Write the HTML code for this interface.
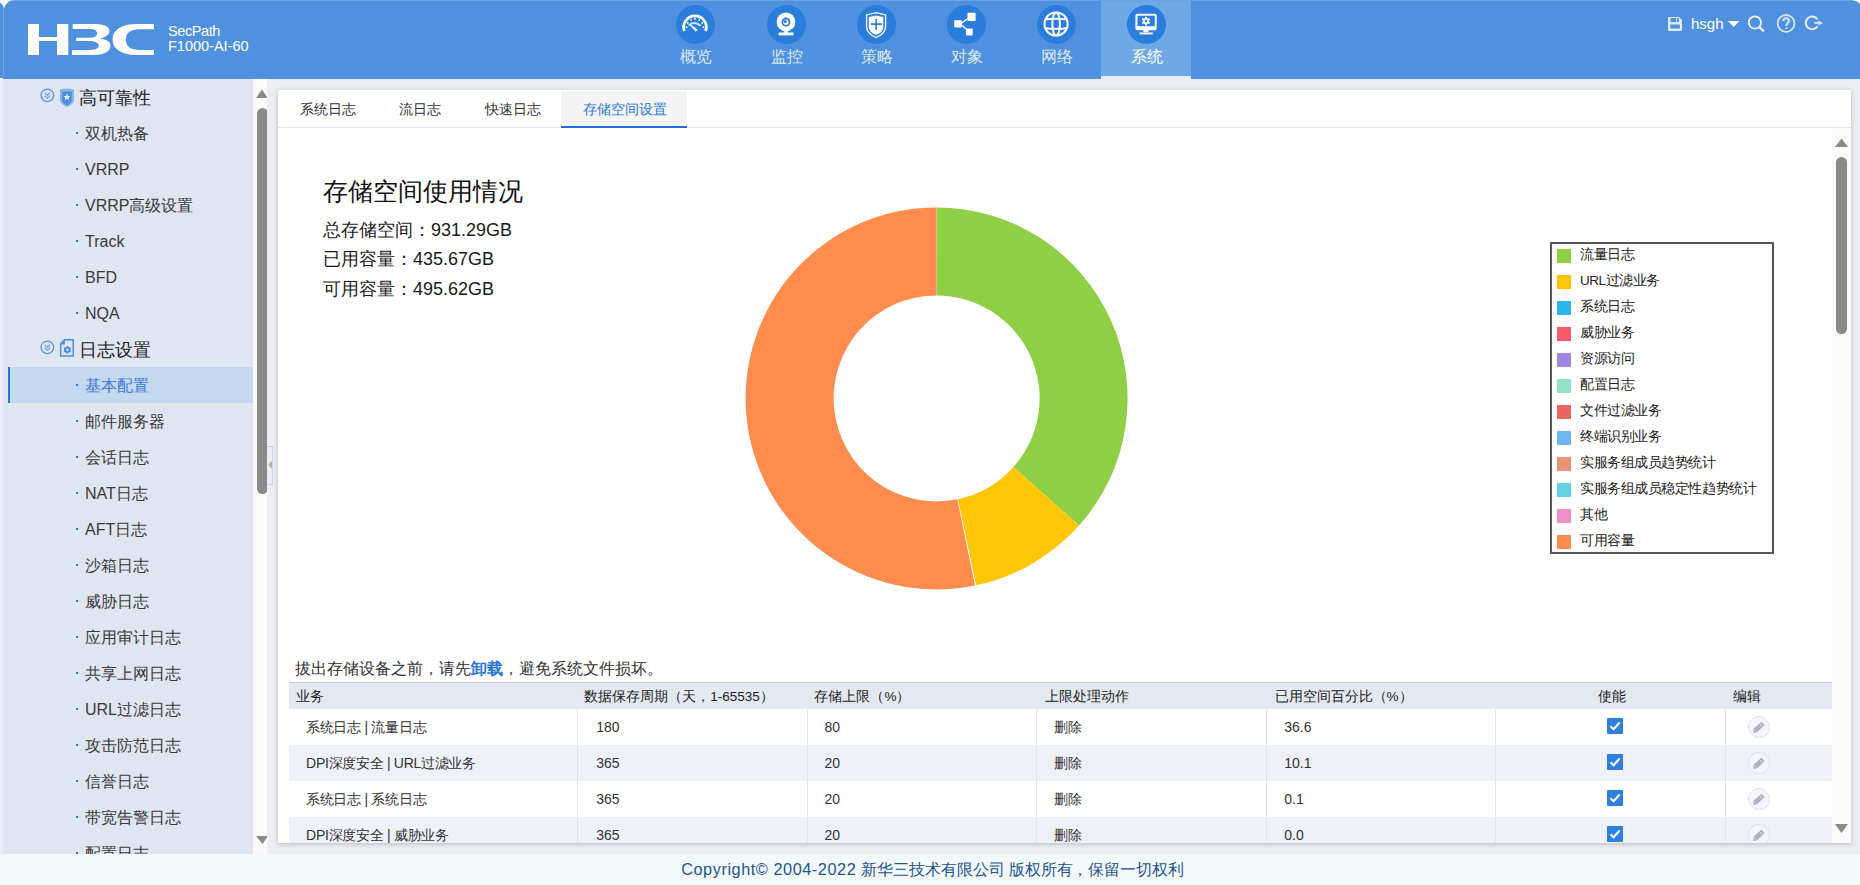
<!DOCTYPE html>
<html><head><meta charset="utf-8">
<style>
*{margin:0;padding:0;box-sizing:border-box}
html,body{width:1860px;height:885px;overflow:hidden;background:#eceef3;font-family:"Liberation Sans",sans-serif;color:#333}
.abs{position:absolute}
#hdr{position:absolute;left:0;top:0;width:1860px;height:79px;background:#4f91de}
.nav{position:absolute;top:0;width:90px;height:79px}
.nav .c{position:absolute;left:26px;top:4.8px;width:39px;height:39px;border-radius:50%;background:#2b7ddc}
.nav .c svg{position:absolute;left:-0.9px;top:-0.5px;overflow:visible}
.nav .t{position:absolute;left:0.5px;width:90px;top:46.5px;text-align:center;font-size:16px;color:#dfe9f7;line-height:20px}
.nav.on{background:#6ea8e6}
.nav.on .t{color:#fff}
.nav.on:after{content:"";position:absolute;left:0;bottom:0;width:90px;height:3px;background:#e6eff9}
#side{position:absolute;left:3px;top:79px;width:250px;height:775px;background:linear-gradient(to right,#dde6f4 0,#dde6f4 5px,#dfe5f1 5px);overflow:hidden}
#side .it{position:absolute;left:0;width:250px;height:36px;line-height:38px;font-size:16px;color:#3a3a3a}
#side .it .d{position:absolute;left:73px;top:17px;width:2px;height:2px;background:#2a7ad8}
#side .it span{position:absolute;left:82px;top:0}
#side .g{position:absolute;left:0;width:250px;height:36px;line-height:36px;font-size:18px;color:#222}
#side .g span{position:absolute;left:76px;top:0.5px}
#side .sel{background:#c4d8ef;left:5px;width:245px}
#side .sel:before{content:"";position:absolute;left:0;top:0;width:2px;height:36px;background:#2a72d8}
#side .sel span{color:#3d7ad6;left:77px}
#side .sel .d{left:68px}
#sb1{position:absolute;left:253px;top:79px;width:14px;height:775px;background:#fafafa;overflow:hidden}
#panel{position:absolute;left:278px;top:90px;width:1573px;height:753px;background:#fff;box-shadow:0 1px 5px rgba(0,0,0,0.22)}
#footer{position:absolute;left:0;top:854px;width:1860px;height:31px;background:#f3f9f9;text-align:center;font-size:16.3px;padding-left:5px;color:#24548f;line-height:31px}
#panel .tab{position:absolute;top:1px;height:37px}
#panel .tab span{position:absolute;top:8px;font-size:14px;line-height:20px;color:#333;white-space:nowrap}
#panel .tab.on{background:#f4f4f4;border-bottom:2px solid #1d72dc}
#panel .tab.on span{color:#2a7ad8}
#legend{position:absolute;left:1272px;top:152px;width:224px;height:312px;border:2px solid #575757;background:#fff}
#legend i{position:absolute;left:5px;width:14px;height:14px}
#legend span{position:absolute;left:28px;margin-top:-2.5px;font-size:13.5px;letter-spacing:-0.45px;line-height:20px;color:#222;white-space:nowrap}
#tbl{position:absolute;left:11px;top:592px;width:1543px;height:161px;overflow:hidden;border-top:1px solid #c9c9c9}
#tbl .th{position:absolute;left:0;top:0;width:1543px;height:26px;background:#e3e9f1}
#tbl .ht{position:absolute;top:3.5px;font-size:13.5px;line-height:20px;color:#222;white-space:nowrap}
#tbl .tr{position:absolute;left:0;width:1543px;height:36px}
#tbl .vl{position:absolute;top:0;width:1px;height:36px;background:#e4e4e4}
#tbl .td{position:absolute;top:7.5px;font-size:14px;line-height:20px;color:#333;white-space:nowrap}
#tbl .cb{position:absolute;top:9px;width:16px;height:16px;background:#2f7fdc;border-radius:1px}
#tbl .cb svg{display:block}
#tbl .ed{position:absolute;top:6.5px;width:22px;height:22px;border:1px solid #dde2ee;border-radius:50%;background:#f4f6fb}
#tbl .ed svg{position:absolute;left:-1px;top:-1px}
</style></head><body>
<div id="hdr">
  <svg class="abs" style="left:28px;top:24px" width="126" height="31" viewBox="0 0 126 31">
    <path fill="#fff" d="M0 0H11V13H29V0H40.3V31H29V17H11V31H0Z"/><path fill="#fff" d="M44.7 0H66C76 0 81.5 2.5 81.5 7.2C81.5 10.5 78 13 72 14.5C79 15.5 82.5 18 82.5 21.5C82.5 27.5 76 31 66 31H44V26H60C67 26 70.7 24.5 70.7 21.7C70.7 18.8 67 17 61 17H48.2V13.7H61C66.5 13.7 69.2 11.8 69.2 9.2C69.2 6.5 66 5 60 5H44.7Z"/><path fill="#fff" d="M126 0H109C93 0 84.6 6 84.6 15.5C84.6 25 93 31 109 31H126V26H111.5C102.5 26 97.8 22 97.8 15.5C97.8 9 102.5 5.3 111.5 5.3H126Z"/>
  </svg>
  <div class="abs" style="left:168px;top:24px;font-size:14.5px;line-height:15px;color:#fff"><span style="letter-spacing:-0.4px">SecPath</span><br>F1000-AI-60</div>
  <div class="nav" style="left:650px"><div class="c"><svg width="40" height="40" viewBox="0 0 40 40"><path d="M9.36 27A11.3 11.3 0 1 1 30.64 27" fill="none" stroke="#fff" stroke-width="2.7"/>
<g fill="#fff"><circle cx="20" cy="14.7" r="1"/><circle cx="15.9" cy="15.9" r="0.9"/><circle cx="24.2" cy="15.9" r="0.9"/><circle cx="12.8" cy="19" r="0.9"/><circle cx="27.3" cy="19" r="0.9"/><circle cx="11.6" cy="23.2" r="0.9"/><circle cx="28.5" cy="23.2" r="0.9"/></g>
<path d="M13.6 21.4Q19.5 16.2 25.8 21.9" fill="none" stroke="#fff" stroke-width="1.9" opacity="0.8"/>
<path d="M14.9 21.3L15.5 20.5L22.8 25.5L20.9 27.7Z" fill="#fff"/></svg></div><div class="t">概览</div></div>
  <div class="nav" style="left:741px"><div class="c"><svg width="40" height="40" viewBox="0 0 40 40"><circle cx="20" cy="17.9" r="9.4" fill="#fff"/><circle cx="20" cy="18.1" r="4.5" fill="#2b7ddc"/><circle cx="20" cy="18.3" r="2.7" fill="#fff"/><circle cx="19.2" cy="17.4" r="1.5" fill="#2b7ddc"/>
<rect x="18.4" y="26" width="3.4" height="3" fill="#fff"/><rect x="12.7" y="28.5" width="14.8" height="2.9" fill="#fff"/></svg></div><div class="t">监控</div></div>
  <div class="nav" style="left:831px"><div class="c"><svg width="40" height="40" viewBox="0 0 40 40"><path d="M20.1 8.6L29.6 10.9V22.5C29.6 27.5 25 31.5 20.1 33.5C15.2 31.5 10.6 27.5 10.6 22.5V10.9Z" fill="none" stroke="#fff" stroke-width="1.3"/>
<path d="M20.1 11.6L27.3 12.9V23C27.3 26.8 23.8 29.6 20.1 30.9C16.4 29.6 12.8 26.8 12.8 23V12.9Z" fill="#fff"/>
<path d="M14.9 20.2H26M20.2 15V25.7" stroke="#2b7ddc" stroke-width="1.7"/></svg></div><div class="t">策略</div></div>
  <div class="nav" style="left:921px"><div class="c"><svg width="40" height="40" viewBox="0 0 40 40"><path d="M15 19.5L22 14.5M15 20.5L21.5 26" stroke="#fff" stroke-width="1.4"/>
<rect x="21.5" y="8.8" width="8.1" height="8.3" rx="0.8" fill="#fff"/><rect x="8.2" y="16.2" width="7.6" height="7.3" rx="0.8" fill="#fff"/><rect x="19.9" y="24.5" width="6.8" height="6.9" rx="0.8" fill="#fff"/></svg></div><div class="t">对象</div></div>
  <div class="nav" style="left:1011px"><div class="c"><svg width="40" height="40" viewBox="0 0 40 40"><defs><clipPath id="gc"><circle cx="20.1" cy="20" r="11.6"/></clipPath></defs>
<circle cx="20.1" cy="20" r="11.6" fill="none" stroke="#fff" stroke-width="2"/>
<ellipse cx="20.1" cy="20" rx="3.8" ry="11.6" fill="none" stroke="#fff" stroke-width="2"/>
<g clip-path="url(#gc)"><path d="M6 15.9Q20 13.6 34 15.9M6 23.6Q20 25.9 34 23.6" fill="none" stroke="#fff" stroke-width="2"/></g></svg></div><div class="t">网络</div></div>
  <div class="nav on" style="left:1101px"><div class="c"><svg width="40" height="40" viewBox="0 0 40 40"><rect x="9.4" y="9.7" width="21.3" height="16.6" rx="1.8" fill="#fff"/><rect x="11.5" y="11.7" width="17.3" height="10.5" fill="#2b7ddc"/>
<rect x="17.3" y="26" width="5.2" height="2.2" fill="#fff"/><rect x="13.5" y="28.5" width="13.2" height="1.9" fill="#fff"/>
<g transform="translate(20 17.1)" fill="#fff"><circle r="3.1"/><g id="teeth"><rect x="-1" y="-4.3" width="2" height="8.6"/><rect x="-1" y="-4.3" width="2" height="8.6" transform="rotate(60)"/><rect x="-1" y="-4.3" width="2" height="8.6" transform="rotate(120)"/></g></g><circle cx="20" cy="17.1" r="1.3" fill="#2b7ddc"/></svg></div><div class="t">系统</div></div>
  <div class="abs" style="left:1691px;top:14px;font-size:15px;line-height:20px;color:#fff">hsgh</div><svg class="abs" style="left:1668px;top:17px" width="14" height="14" viewBox="0 0 14 14">
<path d="M0 1.2Q0 0 1.2 0H11L14 3V12.8Q14 14 12.8 14H1.2Q0 14 0 12.8Z" fill="#e2ebf8"/>
<rect x="2.4" y="1" width="5.8" height="4.2" fill="#4f91de"/><rect x="9" y="1" width="1.9" height="4.2" fill="#4f91de"/>
<rect x="2.2" y="7.5" width="9.6" height="4.1" fill="#4f91de"/>
</svg>
<svg class="abs" style="left:1727px;top:20px" width="13" height="8"><path d="M1 1H12.5L6.75 7Z" fill="#fff"/></svg>
<svg class="abs" style="left:1746px;top:14px" width="20" height="20" viewBox="0 0 20 20">
<circle cx="8.9" cy="8.5" r="6.1" fill="none" stroke="#eef4fc" stroke-width="1.8"/><path d="M13.4 13.1L17.9 17.3" stroke="#eef4fc" stroke-width="2.4"/>
</svg>
<svg class="abs" style="left:1776px;top:13px" width="21" height="21" viewBox="0 0 21 21">
<circle cx="10.1" cy="10.4" r="8.4" fill="none" stroke="#d3e2f5" stroke-width="1.8"/>
<path d="M7.3 8.1C7.3 6.2 8.5 5.2 10.2 5.2C11.9 5.2 13 6.2 13 7.7C13 9.4 10.5 10 10.5 12.2V13" fill="none" stroke="#d8e5f6" stroke-width="2"/>
<rect x="9.5" y="14.3" width="2" height="1.7" fill="#dbe7f7"/>
</svg>
<svg class="abs" style="left:1803px;top:13px" width="22" height="20" viewBox="0 0 22 20">
<path d="M14.5 6.44A6.35 6.35 0 1 0 14.5 13.36" fill="none" stroke="#e1ebf8" stroke-width="2.1"/>
<path d="M11.1 9.9H16.5" stroke="#d3e2f5" stroke-width="1.9"/><path d="M15.3 7.4L20.1 9.9L15.3 12.4Z" fill="#d3e2f5"/>
</svg>
</div>
<div class="abs" style="left:0;top:0;width:1860px;height:1px;background:#6aa2e4"></div>
<div class="abs" style="left:3px;top:8px;width:1px;height:70px;background:#6da3e3"></div>
<div class="abs" style="left:0;top:77.5px;width:3px;height:2px;background:#eceef3"></div>
<svg class="abs" style="left:0;top:0" width="14" height="10"><path d="M0 0H13Q6 1.5 4 8.5Q2 3 0 3Z" fill="#f6f6f6"/></svg>
<svg class="abs" style="left:1852px;top:0" width="8" height="5"><path d="M0 0H8V4Q6 1 0 0Z" fill="#f6f6f6"/></svg>
<div id="side">
  <div class="g" style="top:0"><svg class="abs" style="left:36.7px;top:8.7px" width="15" height="15" viewBox="0 0 15 15"><circle cx="7.35" cy="7.35" r="6.3" fill="none" stroke="#5b97e3" stroke-width="1.3"/><path d="M4.7 4.8L7.35 7.2L10 4.8M4.7 7.8L7.35 10.2L10 7.8" fill="none" stroke="#6fa3e6" stroke-width="1.3"/></svg><svg class="abs" style="left:56px;top:8.7px" width="16" height="19" viewBox="0 0 16 20" preserveAspectRatio="none"><path d="M1 1.6Q8 -0.6 15 1.6V13Q15 17 8 20Q1 17 1 13Z" fill="#8eb5ea"/><path d="M3.2 4Q8 2.8 12.8 4V12.8Q12.8 15.8 8 18.3Q3.2 15.8 3.2 12.8Z" fill="#4a8ee0"/><path d="M8 5.8L9 8.4L11.6 8.5L9.6 10.2L10.3 12.9L8 11.4L5.7 12.9L6.4 10.2L4.4 8.5L7 8.4Z" fill="#e6ecf5"/></svg><span>高可靠性</span></div>
  <div class="it" style="top:36px"><i class="d"></i><span>双机热备</span></div>
  <div class="it" style="top:72px"><i class="d"></i><span>VRRP</span></div>
  <div class="it" style="top:108px"><i class="d"></i><span>VRRP高级设置</span></div>
  <div class="it" style="top:144px"><i class="d"></i><span>Track</span></div>
  <div class="it" style="top:180px"><i class="d"></i><span>BFD</span></div>
  <div class="it" style="top:216px"><i class="d"></i><span>NQA</span></div>
  <div class="g" style="top:252px"><svg class="abs" style="left:36.7px;top:8.7px" width="15" height="15" viewBox="0 0 15 15"><circle cx="7.35" cy="7.35" r="6.3" fill="none" stroke="#5b97e3" stroke-width="1.3"/><path d="M4.7 4.8L7.35 7.2L10 4.8M4.7 7.8L7.35 10.2L10 7.8" fill="none" stroke="#6fa3e6" stroke-width="1.3"/></svg><svg class="abs" style="left:56px;top:7px" width="16" height="20" viewBox="0 0 16 20"><path d="M5.5 1.7H14.2V18H1.6V5.8Z" fill="none" stroke="#4a8ee0" stroke-width="1.5"/><path d="M1.6 6.5L5.8 1.7V6.5Z" fill="#4a8ee0"/><g transform="translate(8.3 11.8)"><path d="M0 -4.2L1.2 -2.7L3.6 -2.1L3.1 0L3.6 2.1L1.2 2.7L0 4.2L-1.2 2.7L-3.6 2.1L-3.1 0L-3.6 -2.1L-1.2 -2.7Z" fill="#4a8ee0"/><circle r="1.3" fill="#dfe5f1"/></g></svg><span>日志设置</span></div>
  <div class="it sel" style="top:288px"><i class="d"></i><span>基本配置</span></div>
  <div class="it" style="top:324px"><i class="d"></i><span>邮件服务器</span></div>
  <div class="it" style="top:360px"><i class="d"></i><span>会话日志</span></div>
  <div class="it" style="top:396px"><i class="d"></i><span>NAT日志</span></div>
  <div class="it" style="top:432px"><i class="d"></i><span>AFT日志</span></div>
  <div class="it" style="top:468px"><i class="d"></i><span>沙箱日志</span></div>
  <div class="it" style="top:504px"><i class="d"></i><span>威胁日志</span></div>
  <div class="it" style="top:540px"><i class="d"></i><span>应用审计日志</span></div>
  <div class="it" style="top:576px"><i class="d"></i><span>共享上网日志</span></div>
  <div class="it" style="top:612px"><i class="d"></i><span>URL过滤日志</span></div>
  <div class="it" style="top:648px"><i class="d"></i><span>攻击防范日志</span></div>
  <div class="it" style="top:684px"><i class="d"></i><span>信誉日志</span></div>
  <div class="it" style="top:720px"><i class="d"></i><span>带宽告警日志</span></div>
  <div class="it" style="top:756px"><i class="d"></i><span>配置日志</span></div>
</div>
<div id="sb1">
  <svg class="abs" style="left:3px;top:10px" width="11" height="9"><path d="M0 9L6 0.5L11 8V9Z" fill="#8a8a8a"/></svg>
  <div class="abs" style="left:4px;top:29px;width:11px;height:386px;border-radius:5.5px;background:#8a8a8a"></div>
  <svg class="abs" style="left:3px;top:757px" width="11" height="8"><path d="M0 0H12L6.5 8Z" fill="#8a8a8a"/></svg>
</div>
<div class="abs" style="left:267px;top:446px;width:6px;height:39px;border:1px solid #c9d3ee;border-left:none;background:#eceef3"></div>
<svg class="abs" style="left:268px;top:460px" width="5" height="10"><path d="M0 5L4 1V9Z" fill="#b4b4b4"/></svg>
<div id="panel">
  <div class="abs" style="left:0;top:37px;width:1573px;height:1px;background:#e1e8f3"></div>
  <div class="tab" style="left:0;width:100px"><span style="left:22px">系统日志</span></div>
  <div class="tab" style="left:100px;width:86px"><span style="left:21px">流日志</span></div>
  <div class="tab" style="left:186px;width:97px"><span style="left:21px">快速日志</span></div>
  <div class="tab on" style="left:283px;width:126px"><span style="left:22px">存储空间设置</span></div>
  <div class="abs" style="left:45px;top:86.5px;font-size:24.8px;line-height:30px;color:#111">存储空间使用情况</div>
  <div class="abs" style="left:45px;top:125.5px;font-size:18px;line-height:29.5px;color:#1a1a1a">总存储空间：931.29GB<br>已用容量：435.67GB<br>可用容量：495.62GB</div>
  <div class="abs" style="left:17px;top:569px;font-size:16px;line-height:20px;color:#333">拔出存储设备之前，请先<b style="color:#2a74d4">卸载</b>，避免系统文件损坏。</div>
  <svg class="abs" style="left:0;top:0.5px" width="1573" height="753"><path fill="#8fcf45" d="M658.60 116.40A191 191 0 0 1 801.07 434.61L735.43 376.00A103 103 0 0 0 658.60 204.40Z"/><path fill="#ffc608" d="M801.07 434.61A191 191 0 0 1 697.92 494.31L679.80 408.19A103 103 0 0 0 735.43 376.00Z"/><path fill="#ffffff" d="M697.92 494.31A191 191 0 0 1 696.96 494.51L679.29 408.30A103 103 0 0 0 679.80 408.19Z"/><path fill="#ff8c4f" d="M696.96 494.51A191 191 0 1 1 658.57 116.40L658.58 204.40A103 103 0 1 0 679.29 408.30Z"/></svg><div id="legend"><i style="top:5px;background:#8fcf45"></i><span style="top:3px">流量日志</span><i style="top:31px;background:#ffc608"></i><span style="top:29px">URL过滤业务</span><i style="top:57px;background:#2bb6ea"></i><span style="top:55px">系统日志</span><i style="top:83px;background:#fa5a6a"></i><span style="top:81px">威胁业务</span><i style="top:109px;background:#9d87e2"></i><span style="top:107px">资源访问</span><i style="top:135px;background:#94e2c3"></i><span style="top:133px">配置日志</span><i style="top:161px;background:#ec6464"></i><span style="top:159px">文件过滤业务</span><i style="top:187px;background:#6fb6f0"></i><span style="top:185px">终端识别业务</span><i style="top:213px;background:#e59475"></i><span style="top:211px">实服务组成员趋势统计</span><i style="top:239px;background:#62d1e1"></i><span style="top:237px">实服务组成员稳定性趋势统计</span><i style="top:265px;background:#ee8fc6"></i><span style="top:263px">其他</span><i style="top:291px;background:#ff8c4f"></i><span style="top:289px">可用容量</span></div>
  <div class="abs" style="left:1554px;top:38px;width:19px;height:715px;background:#fafafa">
  <svg class="abs" style="left:3px;top:10px" width="13" height="9"><path d="M0 9L6.5 0.5L13 9Z" fill="#8a8a8a"/></svg>
  <div class="abs" style="left:4px;top:29px;width:11px;height:177px;border-radius:5.5px;background:#8a8a8a"></div>
  <svg class="abs" style="left:3px;top:696px" width="13" height="9"><path d="M0 0H13L6.5 9Z" fill="#8a8a8a"/></svg>
</div><div id="tbl"><div class="th"></div><span class="ht" style="left:6.5px">业务</span><span class="ht" style="left:295.3px">数据保存周期（天，1-65535）</span><span class="ht" style="left:525.4px">存储上限（%）</span><span class="ht" style="left:755.7px">上限处理动作</span><span class="ht" style="left:985.5px">已用空间百分比（%）</span><span class="ht" style="left:1309.2px">使能</span><span class="ht" style="left:1443.6px">编辑</span><div class="tr" style="top:26px;background:#fff"><i class="vl" style="left:288px"></i><i class="vl" style="left:518px"></i><i class="vl" style="left:747px"></i><i class="vl" style="left:977px"></i><i class="vl" style="left:1206px"></i><i class="vl" style="left:1436px"></i><span class="td" style="left:17.1px;letter-spacing:-0.3px">系统日志 | 流量日志</span><span class="td" style="left:307.3px">180</span><span class="td" style="left:535.5px">80</span><span class="td" style="left:764.8px">删除</span><span class="td" style="left:995.3px">36.6</span><b class="cb" style="left:1318px"><svg width="16" height="16" viewBox="0 0 16 16"><path d="M3.5 8.2L6.6 11.2L12.6 4.6" fill="none" stroke="#fff" stroke-width="2.2"/></svg></b><b class="ed" style="left:1459px"><svg width="22" height="22" viewBox="0 0 22 22"><path d="M5.2 16.9L5.7 12.6L13.4 5.7L16.7 9.3L9 16.2Z" fill="#aab0c9"/><path d="M6.4 13.6L8.3 15.4M11.6 7.6L14.9 11.1" stroke="#e6e9f3" stroke-width="0.8"/></svg></b></div><div class="tr" style="top:62px;background:#eef1f8"><i class="vl" style="left:288px"></i><i class="vl" style="left:518px"></i><i class="vl" style="left:747px"></i><i class="vl" style="left:977px"></i><i class="vl" style="left:1206px"></i><i class="vl" style="left:1436px"></i><span class="td" style="left:17.1px;letter-spacing:-0.3px">DPI深度安全 | URL过滤业务</span><span class="td" style="left:307.3px">365</span><span class="td" style="left:535.5px">20</span><span class="td" style="left:764.8px">删除</span><span class="td" style="left:995.3px">10.1</span><b class="cb" style="left:1318px"><svg width="16" height="16" viewBox="0 0 16 16"><path d="M3.5 8.2L6.6 11.2L12.6 4.6" fill="none" stroke="#fff" stroke-width="2.2"/></svg></b><b class="ed" style="left:1459px"><svg width="22" height="22" viewBox="0 0 22 22"><path d="M5.2 16.9L5.7 12.6L13.4 5.7L16.7 9.3L9 16.2Z" fill="#aab0c9"/><path d="M6.4 13.6L8.3 15.4M11.6 7.6L14.9 11.1" stroke="#e6e9f3" stroke-width="0.8"/></svg></b></div><div class="tr" style="top:98px;background:#fff"><i class="vl" style="left:288px"></i><i class="vl" style="left:518px"></i><i class="vl" style="left:747px"></i><i class="vl" style="left:977px"></i><i class="vl" style="left:1206px"></i><i class="vl" style="left:1436px"></i><span class="td" style="left:17.1px;letter-spacing:-0.3px">系统日志 | 系统日志</span><span class="td" style="left:307.3px">365</span><span class="td" style="left:535.5px">20</span><span class="td" style="left:764.8px">删除</span><span class="td" style="left:995.3px">0.1</span><b class="cb" style="left:1318px"><svg width="16" height="16" viewBox="0 0 16 16"><path d="M3.5 8.2L6.6 11.2L12.6 4.6" fill="none" stroke="#fff" stroke-width="2.2"/></svg></b><b class="ed" style="left:1459px"><svg width="22" height="22" viewBox="0 0 22 22"><path d="M5.2 16.9L5.7 12.6L13.4 5.7L16.7 9.3L9 16.2Z" fill="#aab0c9"/><path d="M6.4 13.6L8.3 15.4M11.6 7.6L14.9 11.1" stroke="#e6e9f3" stroke-width="0.8"/></svg></b></div><div class="tr" style="top:134px;background:#eef1f8"><i class="vl" style="left:288px"></i><i class="vl" style="left:518px"></i><i class="vl" style="left:747px"></i><i class="vl" style="left:977px"></i><i class="vl" style="left:1206px"></i><i class="vl" style="left:1436px"></i><span class="td" style="left:17.1px;letter-spacing:-0.3px">DPI深度安全 | 威胁业务</span><span class="td" style="left:307.3px">365</span><span class="td" style="left:535.5px">20</span><span class="td" style="left:764.8px">删除</span><span class="td" style="left:995.3px">0.0</span><b class="cb" style="left:1318px"><svg width="16" height="16" viewBox="0 0 16 16"><path d="M3.5 8.2L6.6 11.2L12.6 4.6" fill="none" stroke="#fff" stroke-width="2.2"/></svg></b><b class="ed" style="left:1459px"><svg width="22" height="22" viewBox="0 0 22 22"><path d="M5.2 16.9L5.7 12.6L13.4 5.7L16.7 9.3L9 16.2Z" fill="#aab0c9"/><path d="M6.4 13.6L8.3 15.4M11.6 7.6L14.9 11.1" stroke="#e6e9f3" stroke-width="0.8"/></svg></b></div></div>
</div>
<div id="footer"><span style="letter-spacing:0.55px">Copyright© 2004-2022 </span><span style="letter-spacing:-0.1px">新华三技术有限公司 版权所有，保留一切权利</span></div>
</body></html>
